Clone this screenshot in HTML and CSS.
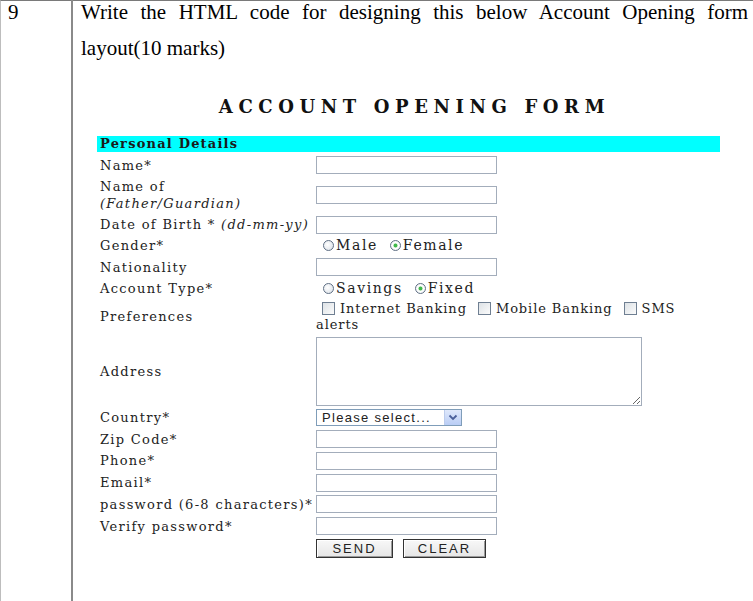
FILE: index.html
```html
<!DOCTYPE html>
<html>
<head>
<meta charset="utf-8">
<link rel="stylesheet" href="styles.css">
</head>
<body>
<div class="frame">
  <div class="num">9</div>
  <div class="content">
    <p class="question">Write the HTML code for designing this below Account Opening form layout(10 marks)</p>
    <h1 class="title">ACCOUNT OPENING FORM</h1>
    <form class="form">
      <div class="head">Personal Details</div>

      <div class="lbl">Name*</div>
      <div class="fld"><input class="txt" type="text"></div>

      <div class="lbl two">Name of<br><i>(Father/Guardian)</i></div>
      <div class="fld"><input class="txt" type="text"></div>

      <div class="lbl">Date of Birth * <i>(dd-mm-yy)</i></div>
      <div class="fld"><input class="txt" type="text"></div>

      <div class="lbl">Gender*</div>
      <div class="fld opts">
        <label class="opt"><input class="radio" type="radio" name="g"><span>Male</span></label>
        <label class="opt"><input class="radio" type="radio" name="g" checked><span>Female</span></label>
      </div>

      <div class="lbl">Nationality</div>
      <div class="fld"><input class="txt" type="text"></div>

      <div class="lbl">Account Type*</div>
      <div class="fld opts">
        <label class="opt"><input class="radio" type="radio" name="a"><span>Savings</span></label>
        <label class="opt"><input class="radio" type="radio" name="a" checked><span>Fixed</span></label>
      </div>

      <div class="lbl">Preferences</div>
      <div class="fld prefs"><input class="check" type="checkbox"><span class="ct">Internet Banking</span> <input class="check" type="checkbox"><span class="ct">Mobile Banking</span> <input class="check" type="checkbox"><span class="ct">SMS</span> <span class="ct">alerts</span></div>

      <div class="lbl">Address</div>
      <div class="fld"><textarea class="area"></textarea></div>

      <div class="lbl">Country*</div>
      <div class="fld selrow">
        <div class="selwrap">
          <select class="sel"><option>Please select...</option></select>
          <span class="selbtn"><svg width="10" height="7" viewBox="0 0 10 7"><path d="M1.5 1.5 L5 5 L8.5 1.5" fill="none" stroke="#4a5f9a" stroke-width="1.8"/></svg></span>
        </div>
      </div>

      <div class="lbl">Zip Code*</div>
      <div class="fld"><input class="txt" type="text"></div>

      <div class="lbl">Phone*</div>
      <div class="fld"><input class="txt" type="text"></div>

      <div class="lbl">Email*</div>
      <div class="fld"><input class="txt" type="text"></div>

      <div class="lbl">password (6-8 characters)*</div>
      <div class="fld"><input class="txt" type="password"></div>

      <div class="lbl">Verify password*</div>
      <div class="fld"><input class="txt" type="password"></div>

      <div class="lbl"></div>
      <div class="fld btns">
        <button class="btn send" type="button">SEND</button>
        <button class="btn clear" type="button">CLEAR</button>
      </div>
    </form>
  </div>
</div>
</body>
</html>
```

FILE: styles.css
```css
html, body {
  margin: 0;
  padding: 0;
  background: #ffffff;
}
body {
  width: 753px;
  height: 601px;
  overflow: hidden;
}
.frame {
  display: flex;
  height: 601px;
  border-top: 1px solid #7a7a7a;
  border-left: 1px solid #bdbdbd;
  box-sizing: border-box;
}
.num {
  width: 72px;
  flex: none;
  border-right: 2px solid #8a8a8a;
  font-family: "Liberation Serif", serif;
  font-size: 21px;
  line-height: 37px;
  padding-left: 7px;
  box-sizing: border-box;
  margin-top: -7px;
  color: #000;
}
.content {
  flex: 1;
  padding: 0 5px 0 8px;
  min-width: 0;
}
.question {
  margin: -7px 0 0 0;
  font-family: "Liberation Serif", serif;
  font-size: 21px;
  line-height: 36px;
  text-align: justify;
  color: #000;
}
.title {
  margin: 31px 0 0 0;
  text-align: center;
  font-family: "DejaVu Serif", serif;
  font-weight: bold;
  font-size: 18px;
  letter-spacing: 5.6px;
  line-height: 20px;
  color: #111;
}
.form {
  display: grid;
  grid-template-columns: 219px 404px;
  margin: 19px 0 0 16px;
  font-family: "DejaVu Serif", serif;
  font-size: 13px;
  letter-spacing: 1.3px;
  color: #222;
}
.head {
  grid-column: 1 / 3;
  background: #00ffff;
  font-weight: bold;
  height: 16px;
  line-height: 16px;
  padding-left: 3px;
  margin-bottom: 2px;
  color: #1a1a1a;
  letter-spacing: 1.2px;
}
.lbl {
  align-self: center;
  padding: 2px 0 1.75px 3px;
  line-height: 17px;
  white-space: nowrap;
}
.fld {
  align-self: center;
  padding: 2px 0 1.75px 0;
  line-height: 17px;
}
.txt {
  display: block;
  width: 181px;
  height: 18px;
  box-sizing: border-box;
  border: 1px solid #a3adbb;
  margin: 0;
  padding: 0 2px;
  background: #fff;
}
.opts {
  display: flex;
  gap: 12px;
  padding-left: 7px;
  font-size: 14px;
  letter-spacing: 1.6px;
}
.opt {
  display: inline-flex;
  align-items: center;
}
.radio {
  appearance: none;
  -webkit-appearance: none;
  width: 11px;
  height: 11px;
  margin: 0 2px 0 0;
  border: 1px solid #5f6f84;
  border-radius: 50%;
  background: radial-gradient(circle at 40% 40%, #ffffff 0%, #dfe4ea 80%);
  box-sizing: border-box;
}
.radio:checked {
  background: radial-gradient(circle, #3fb94a 0, #3fb94a 1.6px, #d8eed8 2.2px, #ffffff 3px, #e4e8ec 100%);
}
.prefs {
  padding: 2px 0 2px 0;
  width: 375px;
  line-height: 16px;
  letter-spacing: 0.9px;
  white-space: normal;
}
.check {
  appearance: none;
  -webkit-appearance: none;
  width: 13px;
  height: 13px;
  margin: 0 5px -2px 6px;
  border: 1px solid #6f7f92;
  background: linear-gradient(135deg, #dde2e6, #fbfbfb);
  box-sizing: border-box;
  vertical-align: baseline;
}
.check:first-child {
  margin-left: 6px;
}
.area {
  display: block;
  width: 326px;
  height: 69px;
  box-sizing: border-box;
  border: 1px solid #a3adbb;
  margin: 0;
  padding: 2px;
}
.selrow {
  padding: 2px 0 1.5px 0;
}
.selwrap {
  position: relative;
  width: 146px;
  height: 17px;
}
.sel {
  appearance: none;
  -webkit-appearance: none;
  display: block;
  width: 146px;
  height: 17px;
  box-sizing: border-box;
  border: 1px solid #7f9db9;
  background: #fff;
  font-family: "Liberation Sans", Arial, sans-serif;
  font-size: 13px;
  letter-spacing: 1.3px;
  color: #222;
  padding: 0 0 0 5px;
  margin: 0;
  border-radius: 0;
}
.selbtn {
  position: absolute;
  top: 1px;
  right: 1px;
  width: 17px;
  height: 15px;
  background: linear-gradient(#dfe8fb, #b9cdf5);
  border-left: 1px solid #bcccec;
  box-sizing: border-box;
  display: flex;
  align-items: center;
  justify-content: center;
  pointer-events: none;
}
.btns {
  display: flex;
  gap: 10px;
}
.btn {
  height: 19px;
  margin: 0;
  padding: 0;
  font-family: "Liberation Sans", Arial, sans-serif;
  font-size: 13px;
  letter-spacing: 2px;
  color: #222;
  background: linear-gradient(#f8f8f8, #e6e6e6);
  border: 1px solid #333;
  box-shadow: inset 1px 1px 0 #fff, inset -1px -1px 0 #9a9a9a;
  border-radius: 0;
  line-height: 15px;
}
.send { width: 77px; }
.clear { width: 83px; }
```
